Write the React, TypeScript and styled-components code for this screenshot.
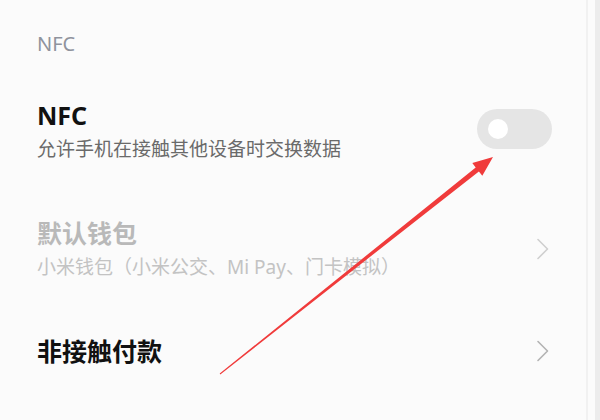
import React from "react";
import styled, { createGlobalStyle } from "styled-components";

const GlobalStyle = createGlobalStyle`
  html, body {
    margin: 0;
    padding: 0;
    background: #fbfbfb;
  }
  body {
    font-family: "Noto Sans", "Noto Sans CJK SC", sans-serif;
  }
`;

interface IItem {
  title: string;
  subtitle?: string;
  disabled?: boolean;
  control: "toggle" | "chevron";
}

const items: IItem[] = [
  { title: "NFC", subtitle: "允许手机在接触其他设备时交换数据", control: "toggle" },
  {
    title: "默认钱包",
    subtitle: "小米钱包（小米公交、Mi Pay、门卡模拟）",
    disabled: true,
    control: "chevron",
  },
  { title: "非接触付款", control: "chevron" },
];

const Chevron = ({ faded }: { faded?: boolean }) => (
  <ChevronSvg width="14" height="22" viewBox="0 0 14 22">
    <path
      d="M2 1.5 L11.5 11 L2 20.5"
      fill="none"
      stroke={faded ? "#cfcfcf" : "#b3b3b3"}
      strokeWidth="1.6"
      strokeLinecap="round"
      strokeLinejoin="round"
    />
  </ChevronSvg>
);

export default () => {
  return (
    <Page>
      <GlobalStyle />
      <Panel>
        <SectionTitle>NFC</SectionTitle>
        {items.map((item) => (
          <Row key={item.title}>
            <TextBlock>
              <Title $disabled={item.disabled}>{item.title}</Title>
              {item.subtitle && (
                <Subtitle $disabled={item.disabled}>{item.subtitle}</Subtitle>
              )}
            </TextBlock>
            {item.control === "toggle" ? (
              <Toggle>
                <Knob />
              </Toggle>
            ) : (
              <Chevron faded={item.disabled} />
            )}
          </Row>
        ))}
      </Panel>
      <EdgeLine />
      <EdgeGap />
      <EdgeStrip />
      <Annotation width="600" height="420" viewBox="0 0 600 420">
        <polygon
          points="219.7,373.6 475.7,167.4 472.3,163.1 493,157 482.3,175.7 478.9,171.4 220.3,374.4"
          fill="#f03b3b"
        />
      </Annotation>
    </Page>
  );
};

const Page = styled.div`
  position: relative;
  display: flex;
  width: 600px;
  height: 420px;
  overflow: hidden;
  background: #fbfbfb;
`;

const Panel = styled.div`
  flex: 0 0 586px;
  display: flex;
  flex-direction: column;
  padding-top: 32px;
  box-sizing: border-box;
`;

const SectionTitle = styled.div`
  padding-left: 37px;
  margin-bottom: 16px;
  font-size: 20px;
  line-height: 24px;
  color: #8f939d;
`;

const Row = styled.div`
  display: flex;
  align-items: center;
  justify-content: space-between;
  padding: 28px 34px 28px 37px;
`;

const TextBlock = styled.div`
  display: flex;
  flex-direction: column;
  gap: 6px;
`;

const Title = styled.div<{ $disabled?: boolean }>`
  font-size: 25px;
  line-height: 30px;
  font-weight: 700;
  color: ${(p) => (p.$disabled ? "#b9b9b9" : "#111111")};
`;

const Subtitle = styled.div<{ $disabled?: boolean }>`
  font-size: 19px;
  line-height: 26px;
  color: ${(p) => (p.$disabled ? "#c3c3c3" : "#6a6a6a")};
`;

const Toggle = styled.div`
  width: 75px;
  height: 40px;
  border-radius: 20px;
  background: #e5e5e5;
  display: flex;
  align-items: center;
  padding-left: 11px;
  box-sizing: border-box;
  margin-top: -4px;
`;

const Knob = styled.div`
  width: 20px;
  height: 20px;
  border-radius: 50%;
  background: #ffffff;
`;

const ChevronSvg = styled.svg`
  display: block;
  margin-right: 2px;
`;

const EdgeLine = styled.div`
  flex: 0 0 2px;
  background: #f1f1f1;
`;

const EdgeGap = styled.div`
  flex: 0 0 7px;
  background: #fbfbfb;
`;

const EdgeStrip = styled.div`
  flex: 1;
  background: #ececec;
`;

const Annotation = styled.svg`
  position: absolute;
  left: 0;
  top: 0;
  pointer-events: none;
`;
